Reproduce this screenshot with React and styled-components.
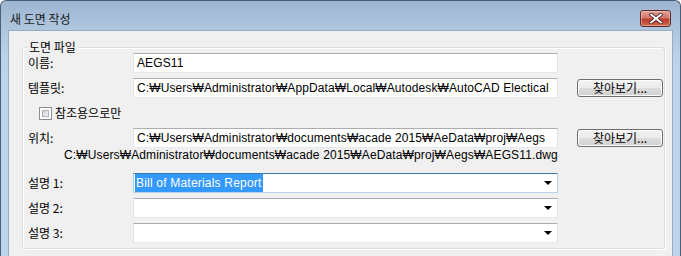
import React from "react";
import styled, { createGlobalStyle } from "styled-components";

const Global = createGlobalStyle`
  html, body { margin: 0; padding: 0; background: #ffffff; }
  body { font-family: "Liberation Sans", "Noto Sans CJK KR", sans-serif; font-size: 12px; color: #000; }
`;

const Window = styled.div`
  position: relative;
  width: 681px;
  height: 256px;
  overflow: hidden;
  box-sizing: border-box;
  border: 1px solid #4a5f78;
  border-bottom: none;
  border-radius: 6px 6px 0 0;
  background: linear-gradient(to bottom, #9db5d0 0px, #b0c7e0 30px, #bcd3ea 60px, #bdd4eb 256px);
  display: flex;
  flex-direction: column;
`;

const TitleBar = styled.div`
  height: 29px;
  flex: none;
  box-sizing: border-box;
  padding: 6px 9px 0 9px;
  display: flex;
  align-items: center;
  justify-content: space-between;
`;

const Title = styled.span`
  font-family: "Noto Sans CJK KR", sans-serif;
  font-size: 12px;
  color: #1a1a1a;
  line-height: 14px;
`;

const CloseBtn = styled.div`
  width: 31px;
  height: 17px;
  box-sizing: border-box;
  border: 1px solid #5e2a28;
  border-radius: 3px;
  background: linear-gradient(to bottom, #e2a093 0%, #d27a6a 45%, #bb3d2c 55%, #cf6a52 100%);
  box-shadow: inset 0 0 0 1px rgba(255, 255, 255, 0.35);
  display: flex;
  align-items: center;
  justify-content: center;
`;

const Client = styled.div`
  flex: 1;
  margin: 0 7px 0 7px;
  background: #f0f0f0;
  border-left: 1px solid #98adc4;
  border-right: 1px solid #98adc4;
  border-top: 1px solid #98adc4;
  padding: 16px 7px 0 13px;
`;

const Group = styled.div`
  position: relative;
  border: 1px solid #d5dfe5;
  border-radius: 3px;
  box-shadow: 1px 1px 0 #ffffff, inset 1px 1px 0 #ffffff;
  padding: 5px 0 5px 5px;
  display: flex;
  flex-direction: column;
  gap: 5px;
`;

const Legend = styled.span`
  position: absolute;
  left: 4px;
  top: -8px;
  padding: 0 2px;
  background: #f0f0f0;
  font-family: "Noto Sans CJK KR", sans-serif;
  line-height: 14px;
`;

const Row = styled.div`
  display: flex;
  align-items: center;
  height: ${(p) => p.$h || 20}px;
`;

const Label = styled.span`
  width: 105px;
  flex: none;
  font-family: "Noto Sans CJK KR", sans-serif;
  line-height: 14px;
`;

const TextBox = styled.div`
  width: 425px;
  height: 20px;
  flex: none;
  box-sizing: border-box;
  background: #fff;
  border: 1px solid;
  border-color: ${(p) =>
    p.$focus ? "#3d7bad #b5cfe7 #b7d5ee #b5cfe7" : "#abadb3 #e2e3ea #e3e9ef #e2e3ea"};
  padding: 0 5px 0 3px;
  display: flex;
  align-items: center;
  justify-content: space-between;
  line-height: 14px;
  letter-spacing: 0.1px;
  white-space: nowrap;
  overflow: hidden;
`;

const Selected = styled.span`
  background: #3399ff;
  color: #fff;
  line-height: 18px;
  margin-left: -2px;
  padding: 0 1px 0 1px;
  letter-spacing: 0.2px;
`;

const Arrow = styled.span`
  width: 0;
  height: 0;
  border-left: 4px solid transparent;
  border-right: 4px solid transparent;
  border-top: 4px solid #000;
`;

const Button = styled.div`
  margin-left: 19px;
  width: 86px;
  height: 18px;
  flex: none;
  box-sizing: border-box;
  border: 1px solid #707070;
  border-radius: 3px;
  background: linear-gradient(to bottom, #f2f2f2 0%, #ebebeb 50%, #dddddd 51%, #cfcfcf 100%);
  box-shadow: inset 0 0 0 1px #fcfcfc;
  display: flex;
  align-items: center;
  justify-content: center;
  font-family: "Noto Sans CJK KR", sans-serif;
  line-height: 14px;
`;

const CheckRow = styled.div`
  height: 20px;
  display: flex;
  align-items: center;
  padding-left: 11px;
  gap: 3px;
`;

const Check = styled.span`
  width: 13px;
  height: 13px;
  box-sizing: border-box;
  border: 1px solid #8e8f8f;
  background: #fff;
  padding: 2px;
  display: flex;
`;

const CheckInner = styled.span`
  flex: 1;
  background: linear-gradient(135deg, #cbcfd5 0%, #f6f6f6 100%);
  border: 1px solid #aeb3b9;
`;

const CheckText = styled.span`
  font-family: "Noto Sans CJK KR", sans-serif;
  line-height: 14px;
`;

const PathLine = styled.div`
  height: 20px;
  padding-left: 36px;
  line-height: 14px;
  letter-spacing: 0.13px;
  white-space: nowrap;
  margin-top: -5px;
`;

export default function App() {
  return (
    <>
      <Global />
      <Window>
        <TitleBar>
          <Title>새 도면 작성</Title>
          <CloseBtn>
            <svg width="14" height="11" viewBox="0 0 14 11">
              <path
                d="M2 1.5 L12 9.5 M12 1.5 L2 9.5"
                stroke="#4a2320"
                strokeWidth="3.6"
                strokeLinecap="round"
              />
              <path
                d="M2 1.5 L12 9.5 M12 1.5 L2 9.5"
                stroke="#ffffff"
                strokeWidth="2"
                strokeLinecap="round"
              />
            </svg>
          </CloseBtn>
        </TitleBar>
        <Client>
          <Group>
            <Legend>도면 파일</Legend>
            <Row>
              <Label>이름:</Label>
              <TextBox>AEGS11</TextBox>
            </Row>
            <Row>
              <Label>템플릿:</Label>
              <TextBox>C:₩Users₩Administrator₩AppData₩Local₩Autodesk₩AutoCAD Electical</TextBox>
              <Button>찾아보기...</Button>
            </Row>
            <CheckRow>
              <Check>
                <CheckInner />
              </Check>
              <CheckText>참조용으로만</CheckText>
            </CheckRow>
            <Row>
              <Label>위치:</Label>
              <TextBox>C:₩Users₩Administrator₩documents₩acade 2015₩AeData₩proj₩Aegs</TextBox>
              <Button>찾아보기...</Button>
            </Row>
            <PathLine>C:₩Users₩Administrator₩documents₩acade 2015₩AeData₩proj₩Aegs₩AEGS11.dwg</PathLine>
            <Row>
              <Label>설명 1:</Label>
              <TextBox $focus>
                <Selected>Bill of Materials Report</Selected>
                <Arrow />
              </TextBox>
            </Row>
            <Row>
              <Label>설명 2:</Label>
              <TextBox>
                <span />
                <Arrow />
              </TextBox>
            </Row>
            <Row>
              <Label>설명 3:</Label>
              <TextBox>
                <span />
                <Arrow />
              </TextBox>
            </Row>
          </Group>
        </Client>
      </Window>
    </>
  );
}
